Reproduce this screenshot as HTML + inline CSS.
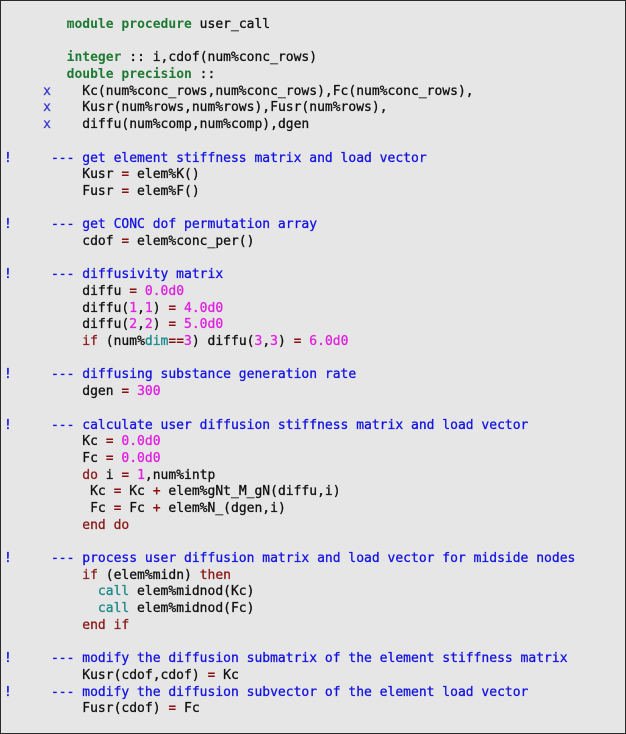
<!DOCTYPE html>
<html><head><meta charset="utf-8"><style>
html,body{margin:0;padding:0;background:#fff}
.box{position:absolute;left:0;top:0;width:624px;height:732px;border:1px solid #2a2a2a;background:#e6e6e6;overflow:hidden}
pre{margin:0;position:absolute;left:3px;top:16px;font-family:"DejaVu Sans Mono","Liberation Mono",monospace;font-size:13px;line-height:16.68px;color:#111;-webkit-text-stroke:0.3px}
.k{color:#1e7a32;font-weight:bold;-webkit-text-stroke:0}
.c{color:#1414e0}
.n{color:#e020e0}
.o{color:#8b1010;font-weight:bold;-webkit-text-stroke:0}
.r{color:#8b1a1a}
.t{color:#1a8a8a}
.x{color:#3a3ad0}
</style></head><body><div class="box"><pre>        <span class="k">module procedure</span> user_call

        <span class="k">integer</span> :: i,cdof(num%conc_rows)
        <span class="k">double precision</span> ::
     <span class="x">x</span>    Kc(num%conc_rows,num%conc_rows),Fc(num%conc_rows),
     <span class="x">x</span>    Kusr(num%rows,num%rows),Fusr(num%rows),
     <span class="x">x</span>    diffu(num%comp,num%comp),dgen

<span class="c">!     --- get element stiffness matrix and load vector</span>
          Kusr <span class="o">=</span> elem%K()
          Fusr <span class="o">=</span> elem%F()

<span class="c">!     --- get CONC dof permutation array</span>
          cdof <span class="o">=</span> elem%conc_per()

<span class="c">!     --- diffusivity matrix</span>
          diffu <span class="o">=</span> <span class="n">0.0d0</span>
          diffu(<span class="n">1</span>,<span class="n">1</span>) <span class="o">=</span> <span class="n">4.0d0</span>
          diffu(<span class="n">2</span>,<span class="n">2</span>) <span class="o">=</span> <span class="n">5.0d0</span>
          <span class="r">if</span> (num%<span class="t">dim</span><span class="o">==</span><span class="n">3</span>) diffu(<span class="n">3</span>,<span class="n">3</span>) <span class="o">=</span> <span class="n">6.0d0</span>

<span class="c">!     --- diffusing substance generation rate</span>
          dgen <span class="o">=</span> <span class="n">300</span>

<span class="c">!     --- calculate user diffusion stiffness matrix and load vector</span>
          Kc <span class="o">=</span> <span class="n">0.0d0</span>
          Fc <span class="o">=</span> <span class="n">0.0d0</span>
          <span class="r">do</span> i <span class="o">=</span> <span class="n">1</span>,num%intp
           Kc <span class="o">=</span> Kc <span class="o">+</span> elem%gNt_M_gN(diffu,i)
           Fc <span class="o">=</span> Fc <span class="o">+</span> elem%N_(dgen,i)
          <span class="r">end do</span>

<span class="c">!     --- process user diffusion matrix and load vector for midside nodes</span>
          <span class="r">if</span> (elem%midn) <span class="r">then</span>
            <span class="t">call</span> elem%midnod(Kc)
            <span class="t">call</span> elem%midnod(Fc)
          <span class="r">end if</span>

<span class="c">!     --- modify the diffusion submatrix of the element stiffness matrix</span>
          Kusr(cdof,cdof) <span class="o">=</span> Kc
<span class="c">!     --- modify the diffusion subvector of the element load vector</span>
          Fusr(cdof) <span class="o">=</span> Fc
</pre></div></body></html>
